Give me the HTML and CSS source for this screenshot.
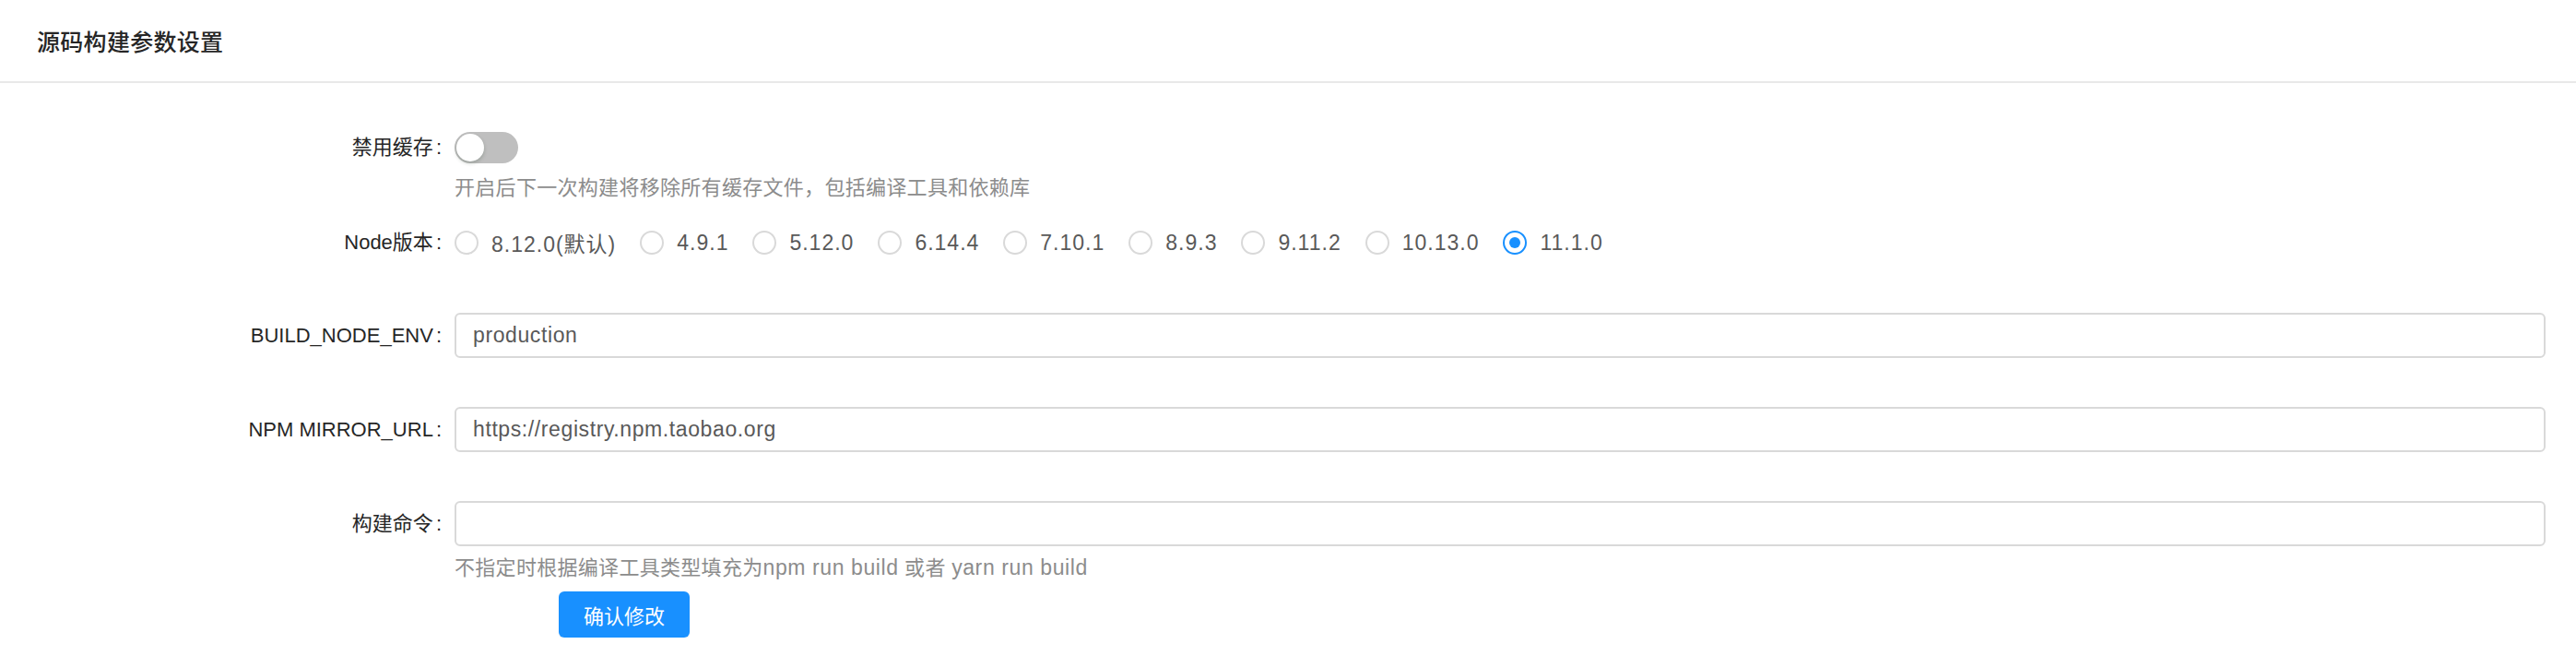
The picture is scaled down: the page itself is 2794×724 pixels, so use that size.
FILE: index.html
```html
<!DOCTYPE html>
<html lang="zh-CN">
<head>
<meta charset="utf-8">
<title>源码构建参数设置</title>
<link rel="stylesheet" href="styles.css">
</head>
<body>
<div class="card">
  <div class="card-head"><span class="card-title">源码构建参数设置</span></div>
  <div class="card-body">
    <div class="row row-switch">
      <div class="label">禁用缓存</div>
      <div class="control">
        <span class="switch"><span class="knob"></span></span>
      </div>
    </div>
    <div class="row row-help1">
      <div class="label-empty"></div>
      <div class="help">开启后下一次构建将移除所有缓存文件，包括编译工具和依赖库</div>
    </div>
    <div class="row row-radio">
      <div class="label">Node版本</div>
      <div class="control radios">
        <label class="radio"><span class="dot"></span><span class="rtext">8.12.0(默认)</span></label>
        <label class="radio"><span class="dot"></span><span class="rtext">4.9.1</span></label>
        <label class="radio"><span class="dot"></span><span class="rtext">5.12.0</span></label>
        <label class="radio"><span class="dot"></span><span class="rtext">6.14.4</span></label>
        <label class="radio"><span class="dot"></span><span class="rtext">7.10.1</span></label>
        <label class="radio"><span class="dot"></span><span class="rtext">8.9.3</span></label>
        <label class="radio"><span class="dot"></span><span class="rtext">9.11.2</span></label>
        <label class="radio"><span class="dot"></span><span class="rtext">10.13.0</span></label>
        <label class="radio checked"><span class="dot"></span><span class="rtext">11.1.0</span></label>
      </div>
    </div>
    <div class="row row-input first">
      <div class="label">BUILD_NODE_ENV</div>
      <div class="control"><div class="input">production</div></div>
    </div>
    <div class="row row-input">
      <div class="label">NPM MIRROR_URL</div>
      <div class="control"><div class="input">https://registry.npm.taobao.org</div></div>
    </div>
    <div class="row row-input">
      <div class="label">构建命令</div>
      <div class="control"><div class="input"></div></div>
    </div>
    <div class="row row-help2">
      <div class="label-empty"></div>
      <div class="help">不指定时根据编译工具类型填充为<span class="latin">npm run build</span> 或者 <span class="latin">yarn run build</span></div>
    </div>
    <div class="row row-btn">
      <div class="label-empty"></div>
      <div class="control"><button class="btn">确认修改</button></div>
    </div>
  </div>
</div>
</body>
</html>
```

FILE: styles.css
```css
* { box-sizing: border-box; }
html, body { margin: 0; padding: 0; background: #fff; }
body {
  font-family: "Liberation Sans", "Noto Sans CJK SC", sans-serif;
  font-size: 22px;
  color: #262626;
}
.card-head {
  height: 90px;
  border-bottom: 2px solid #e8e8e8;
  display: flex;
  align-items: center;
  padding-left: 40px;
}
.card-title {
  font-size: 25px;
  font-weight: 500;
  color: #262626;
  font-family: "Noto Sans CJK SC", sans-serif;
  letter-spacing: 0.3px;
}
.card-body { padding-right: 33px; }
.row {
  display: grid;
  grid-template-columns: 493px 1fr;
  align-items: center;
}
.label {
  text-align: right;
  white-space: nowrap;
  color: #262626;
  line-height: 30px;
}
.label::after {
  content: ":";
  margin: 0 14px 0 3px;
}
.row-switch { margin-top: 53px; height: 34px; }
.switch {
  display: block;
  width: 69px;
  height: 34px;
  border-radius: 17px;
  background: #bfbfbf;
  padding: 2px;
}
.knob {
  display: block;
  width: 30px;
  height: 30px;
  border-radius: 50%;
  background: #fff;
  box-shadow: 0 2px 4px rgba(0, 35, 11, 0.2);
}
.help {
  color: #8c8c8c;
  line-height: 30px;
  white-space: nowrap;
  letter-spacing: 0.3px;
}
.help .latin {
  font-size: 23px;
  letter-spacing: 0.6px;
}
.row-help1 { margin-top: 12px; }
.row-radio { margin-top: 24px; height: 40px; }
.radios { display: flex; align-items: center; }
.radio {
  display: flex;
  align-items: center;
  margin-right: 12px;
}
.dot {
  width: 26px;
  height: 26px;
  border: 2px solid #d9d9d9;
  border-radius: 50%;
  background: #fff;
  position: relative;
  flex: none;
}
.radio.checked .dot { border-color: #1890ff; }
.radio.checked .dot::after {
  content: "";
  position: absolute;
  left: 5px;
  top: 5px;
  width: 12px;
  height: 12px;
  border-radius: 50%;
  background: #1890ff;
}
.rtext {
  padding: 0 14px;
  font-size: 23px;
  letter-spacing: 1px;
  color: #595959;
  white-space: nowrap;
}
.row-input { margin-top: 53px; }
.row-input.first { margin-top: 56px; }
.input {
  height: 49px;
  border: 2px solid #d9d9d9;
  border-radius: 6px;
  background: #fff;
  padding: 0 18px;
  display: flex;
  align-items: center;
  font-size: 23px;
  letter-spacing: 0.6px;
  color: #595959;
}
.row-help2 { margin-top: 8px; }
.row-btn { margin-top: 10px; }
.btn {
  margin-left: 113px;
  width: 142px;
  height: 50px;
  border: 0;
  border-radius: 6px;
  background: #1890ff;
  color: #fff;
  font-family: "Noto Sans CJK SC", sans-serif;
  font-size: 22px;
  box-shadow: 0 2px 0 rgba(0, 0, 0, 0.045);
  padding: 0;
}
```
